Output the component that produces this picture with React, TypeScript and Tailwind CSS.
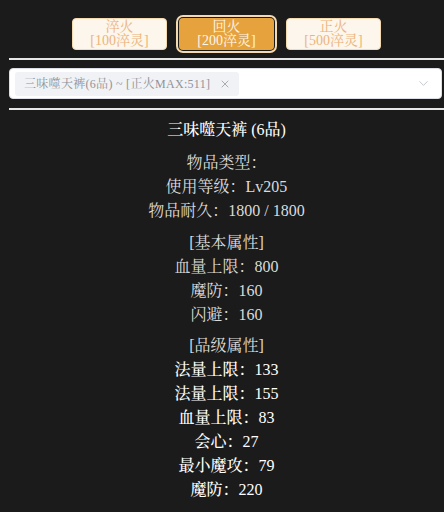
import { ChevronDown, X } from "lucide-react";

const font = {
  fontFamily: '"Liberation Serif", "Noto Serif CJK SC", "Noto Sans CJK SC", serif',
};

const tiers = [
  { name: "淬火", cost: "[100淬灵]", active: false },
  { name: "回火", cost: "[200淬灵]", active: true },
  { name: "正火", cost: "[500淬灵]", active: false },
];

const basic = ["血量上限：800", "魔防：160", "闪避：160"];
const graded = [
  "法量上限：133",
  "法量上限：155",
  "血量上限：83",
  "会心：27",
  "最小魔攻：79",
  "魔防：220",
];

export default function App() {
  return (
    <div className="min-h-screen overflow-hidden bg-[#1b1b1b]" style={font}>
      <div className="ml-[9px] pt-[18px]">
        <div className="flex justify-center gap-3">
          {tiers.map((t) => (
            <button
              key={t.name}
              className={
                t.active
                  ? "flex h-8 w-[95px] flex-col items-center justify-center rounded-[4px] bg-[#e6a23c] text-[14px] leading-[14px] text-[#fff6ea] ring-2 ring-[#f5dab1] ring-offset-1 ring-offset-[#1b1b1b]"
                  : "flex h-8 w-[95px] flex-col items-center justify-center rounded-[4px] border border-[#f5dab1] bg-[#fdf6ec] text-[14px] leading-[14px] text-[#ebb47a]"
              }
            >
              <span>{t.name}</span>
              <span>{t.cost}</span>
            </button>
          ))}
        </div>

        <div className="mt-2 border-t-2 border-[#e6e6e6]" />

        <div className="mr-[2px] mt-2 flex h-[31px] items-center rounded-[4px] border border-[#dcdfe6] bg-white pl-[5px] pr-[10px]">
          <span className="flex h-[24px] items-center gap-[9px] rounded-[3px] bg-[#f0f2f5] pl-[9px] pr-[8px] text-[12px] tracking-[0.3px] text-[#909399]">
            三味噬天裤(6品) ~ [正火MAX:511]
            <X className="h-[12px] w-[12px]" strokeWidth={1.5} />
          </span>
          <ChevronDown className="ml-auto h-[15px] w-[15px] text-[#c0c4cc]" strokeWidth={1.5} />
        </div>

        <div className="mt-[9px] border-t-2 border-[#e6e6e6]" />

        <div className="mt-2 flex flex-col items-center text-[16px] leading-[24px] text-[#dcdcdc]">
          <div className="font-medium text-white">三味噬天裤 (6品)</div>

          <div className="mt-[9px] flex flex-col items-center">
            <div>物品类型：</div>
            <div>使用等级：Lv205</div>
            <div>物品耐久：1800 / 1800</div>
          </div>

          <div className="mt-2 flex flex-col items-center">
            <div>[基本属性]</div>
            {basic.map((b) => (
              <div key={b}>{b}</div>
            ))}
          </div>

          <div className="mt-[7px] flex flex-col items-center">
            <div>[品级属性]</div>
            {graded.map((g, i) => (
              <div key={i} className="font-medium text-white">
                {g}
              </div>
            ))}
          </div>
        </div>
      </div>
    </div>
  );
}
